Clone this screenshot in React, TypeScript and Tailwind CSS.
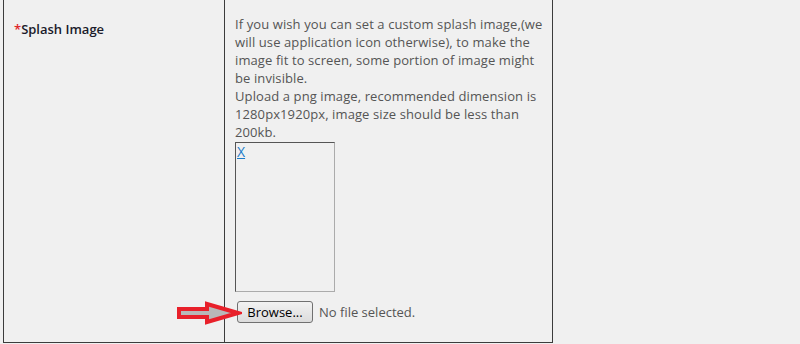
export default function App() {
  return (
    <div className="flex h-[344px] w-[800px] bg-[#f0f0f0] font-['Open_Sans','Noto_Sans',sans-serif] text-[13px] leading-[18px]">
      <div className="w-[3px] shrink-0" />
      <div className="flex h-[343px] border-b border-l border-[#3c3c3c]">
        <div className="w-[221px] border-r border-[#3c3c3c] pl-[10px] pt-[20px]">
          <span className="font-semibold text-[#1b1b2a]">
            <span className="text-[#e0262b]">*</span>Splash Image
          </span>
        </div>
        <div className="relative w-[328px] border-r border-[#3c3c3c] pl-[10px] pt-[15px] text-[#555]">
          <p className="whitespace-nowrap tracking-[0.1px]">
            If you wish you can set a custom splash image,(we
            <br />
            will use application icon otherwise), to make the
            <br />
            image fit to screen, some portion of image might
            <br />
            be invisible.
            <br />
            Upload a png image, recommended dimension is
            <br />
            1280px1920px, image size should be less than
            <br />
            200kb.
          </p>
          <div className="mt-px h-[150px] w-[100px] border border-b-[#ababab] border-l-[#555] border-r-[#ababab] border-t-[#555] pl-px">
            <a href="#" className="text-[14px] text-[#1a7bc9] underline">
              X
            </a>
          </div>
          <div className="mt-[9px] flex items-center gap-[6px] pl-[2px]">
            <button className="h-[22px] w-[76px] rounded-[3px] border border-[#707070] bg-gradient-to-b from-[#f2f2f2] to-[#dcdcdc] text-[13px] leading-[18px] text-black">
              Browse...
            </button>
            <span>No file selected.</span>
          </div>
          <svg
            className="absolute left-[-49px] top-[301px]"
            width="66"
            height="24"
            viewBox="0 0 66 24"
          >
            <path
              d="M3 8 L31 8 L31 3 L62 12 L31 21 L31 16 L3 16 Z"
              fill="#b8b8b8"
              stroke="#e8202a"
              strokeWidth="4"
              strokeLinejoin="miter"
            />
          </svg>
        </div>
      </div>
    </div>
  );
}
